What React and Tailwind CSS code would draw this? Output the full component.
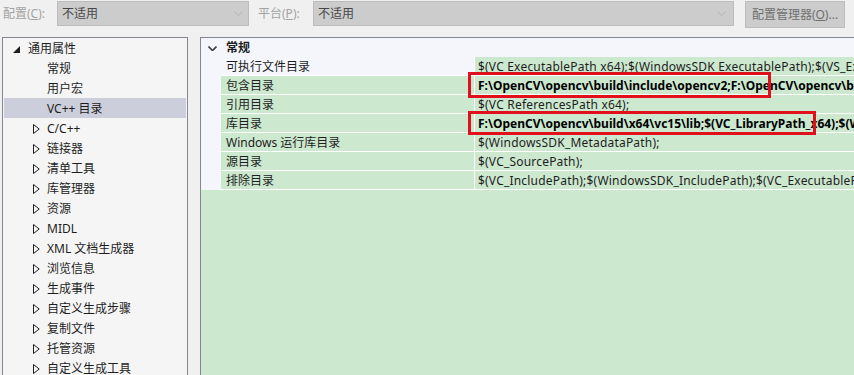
import React from "react";

const FONT = { fontFamily: '"Noto Sans", "Noto Sans CJK SC", sans-serif' };

function Expanded() {
  return (
    <svg width="7" height="7" viewBox="0 0 7 7" className="block">
      <polygon points="7,0 7,7 0,7" fill="#1e1e1e" />
    </svg>
  );
}
function Collapsed() {
  return (
    <svg width="7" height="10" viewBox="0 0 7 10" className="block">
      <polygon points="0.5,0.5 6.2,5 0.5,9.5" fill="none" stroke="#1e1e1e" strokeWidth="1" />
    </svg>
  );
}
function Chevron({ color = "#b4b4b4", w = 9, h = 5, sw = 1 }) {
  return (
    <svg width={w} height={h} viewBox={`0 0 ${w} ${h}`} className="block">
      <polyline points={`0.5,0.5 ${w / 2},${h - 0.5} ${w - 0.5},0.5`} fill="none" stroke={color} strokeWidth={sw} />
    </svg>
  );
}

const children = ["常规", "用户宏", "VC++ 目录"];
const groups = [
  "C/C++",
  "链接器",
  "清单工具",
  "库管理器",
  "资源",
  "MIDL",
  "XML 文档生成器",
  "浏览信息",
  "生成事件",
  "自定义生成步骤",
  "复制文件",
  "托管资源",
  "自定义生成工具",
];

const rows = [
  { name: "可执行文件目录", value: "$(VC ExecutablePath x64);$(WindowsSDK ExecutablePath);$(VS_ExecutablePath);$(MSBuild_ExecutablePath)", nameGreen: false },
  { name: "包含目录", value: "F:\\OpenCV\\opencv\\build\\include\\opencv2;F:\\OpenCV\\opencv\\build\\include;$(VC_IncludePath)", bold: true, nameGreen: true },
  { name: "引用目录", value: "$(VC ReferencesPath x64);", nameGreen: true },
  { name: "库目录", value: "F:\\OpenCV\\opencv\\build\\x64\\vc15\\lib;$(VC_LibraryPath_x64);$(WindowsSDK_LibraryPath_x64)", bold: true, nameGreen: true },
  { name: "Windows 运行库目录", value: "$(WindowsSDK_MetadataPath);", nameGreen: true },
  { name: "源目录", value: "$(VC_SourcePath);", nameGreen: true },
  { name: "排除目录", value: "$(VC_IncludePath);$(WindowsSDK_IncludePath);$(VC_ExecutablePath_x64);$(VC_LibraryPath_x64)", nameGreen: true },
];

export default function App() {
  return (
    <div className="relative w-[854px] h-[375px] overflow-hidden bg-[#f0f0f0] text-[12px] text-[#1e1e1e] flex flex-col" style={FONT}>
      {/* top bar */}
      <div className="h-[37px] flex items-start pt-[1px] shrink-0">
        <div className="w-[57px] h-[25px] pl-[3px] flex items-center text-[#a3a3a3]">
          配置(<span className="underline">C</span>):
        </div>
        <div className="w-[192px] h-[25px] bg-[#cccccc] border border-[#bdbdbd] flex items-center justify-between pl-[4px] pr-[5px] text-[#474747]">
          <span>不适用</span>
          <Chevron />
        </div>
        <div className="w-[64px] h-[25px] pl-[9px] flex items-center text-[#a3a3a3]">
          平台(<span className="underline">P</span>):
        </div>
        <div className="w-[421px] h-[25px] bg-[#cccccc] border border-[#bdbdbd] flex items-center justify-between pl-[4px] pr-[7px] text-[#474747]">
          <span>不适用</span>
          <Chevron />
        </div>
        <div className="ml-[11px] w-[100px] h-[27px] bg-[#cccccc] border border-[#bdbdbd] flex items-center justify-center text-[#6f6f6f]">
          配置管理器(<span className="underline">O</span>)...
        </div>
      </div>

      {/* panels */}
      <div className="flex-1 flex pl-[2px] min-h-0">
        {/* tree */}
        <div className="w-[186px] shrink-0 border border-[#828790] border-b-0 bg-[#f5f5f5] flex flex-col">
          <div className="h-[20px] mx-[1px] flex items-center pl-[9px] pt-[2px] shrink-0">
            <div className="w-[15px] flex items-center"><Expanded /></div>
            <span>通用属性</span>
          </div>
          {children.map((c) => (
            <div key={c} className={`h-[20px] mx-[1px] flex items-center pl-[43px] pt-[2px] shrink-0 ${c === "VC++ 目录" ? "bg-[#cccedb]" : ""}`}>
              <span>{c}</span>
            </div>
          ))}
          {groups.map((g) => (
            <div key={g} className="h-[20px] mx-[1px] flex items-center pl-[29px] pt-[2px] shrink-0">
              <div className="w-[14px] flex items-center"><Collapsed /></div>
              <span>{g}</span>
            </div>
          ))}
        </div>

        {/* grid */}
        <div className="ml-[12px] flex-1 border-l border-t border-[#828790] bg-[#f4f6fb] flex flex-col min-w-0">
          <div className="h-[19px] flex items-center shrink-0 pt-[1px]">
            <div className="w-[20px] flex justify-center pl-[2px]">
              <Chevron color="#3c3c3c" w={9} h={5} sw={1.6} />
            </div>
            <span className="pl-[5px] font-bold">常规</span>
          </div>
          {rows.map((r) => (
            <div key={r.name} className="h-[19px] flex shrink-0">
              <div className="w-[20px] shrink-0" />
              <div className={`w-[253px] shrink-0 pl-[5px] pt-[2px] flex items-center border-b border-white ${r.nameGreen ? "bg-[#cce8cf]" : ""}`}>
                <span className="whitespace-nowrap">{r.name}</span>
              </div>
              <div className="flex-1 min-w-0 bg-[#cce8cf] border-l border-b border-white pl-[3px] pt-[2px] flex items-center overflow-hidden">
                <span className={`whitespace-nowrap ${r.bold ? "font-bold text-black" : "tracking-[0.2px]"}`}>{r.value}</span>
              </div>
            </div>
          ))}
          <div className="flex-1 bg-[#cce8cf]" />
        </div>
      </div>

      {/* annotations */}
      <div className="absolute left-[468px] top-[72px] w-[303px] h-[26px] border-[3px] border-[#e0101c]" />
      <div className="absolute left-[468px] top-[111px] w-[348px] h-[24px] border-[3px] border-[#e0101c]" />
    </div>
  );
}
